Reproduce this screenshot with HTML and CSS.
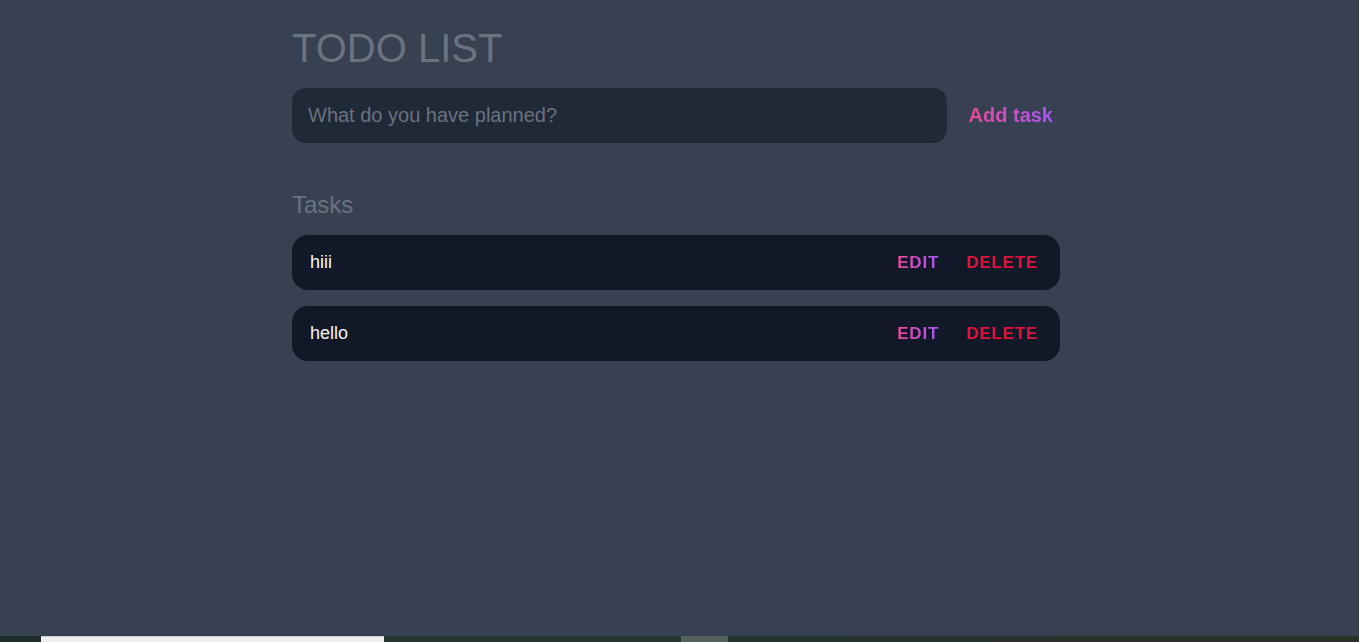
FILE: index.html
```html
<!DOCTYPE html>
<html lang="en">
<head>
<meta charset="utf-8">
<title>Todo List</title>
<link rel="stylesheet" href="styles.css">
</head>
<body>
<main class="app">
  <h1 class="title">TODO LIST</h1>
  <form class="new-task" onsubmit="return false">
    <input class="new-task-input" type="text" placeholder="What do you have planned?">
    <button class="add-btn" type="submit"><span class="grad">Add task</span></button>
  </form>
  <section class="tasks">
    <h2 class="tasks-title">Tasks</h2>
    <div class="task">
      <span class="task-text">hiii</span>
      <div class="actions">
        <button class="edit"><span class="grad">Edit</span></button>
        <button class="delete">Delete</button>
      </div>
    </div>
    <div class="task">
      <span class="task-text">hello</span>
      <div class="actions">
        <button class="edit"><span class="grad">Edit</span></button>
        <button class="delete">Delete</button>
      </div>
    </div>
  </section>
</main>
<div class="taskbar">
  <div class="tb-left"></div>
  <div class="tb-window"></div>
  <div class="tb-mid"></div>
  <div class="tb-btn"></div>
  <div class="tb-rest"></div>
</div>
</body>
</html>
```
FILE: styles.css
```css
* { box-sizing: border-box; }
html, body { height: 100%; }
body {
  margin: 0;
  background: #374151;
  font-family: "Liberation Sans", Arial, sans-serif;
  display: flex;
  flex-direction: column;
  min-height: 100vh;
}
.app {
  flex: 1;
  width: 768px;
  margin-left: 292px;
}
.title {
  margin: 25px 0 0;
  font-size: 40px;
  line-height: 46px;
  font-weight: 400;
  color: #6b7280;
}
.new-task {
  margin-top: 17px;
  display: flex;
  align-items: center;
}
.new-task-input {
  flex: 1;
  height: 55px;
  border: none;
  outline: none;
  border-radius: 14px;
  background: #1f2937;
  padding: 0 16px;
  font-family: inherit;
  font-size: 20px;
  color: #e5e7eb;
}
.new-task-input::placeholder { color: #6b7280; }
.add-btn {
  margin-left: 15px;
  padding: 0 7px;
  background: none;
  border: none;
  font-family: inherit;
  font-size: 20px;
  font-weight: 700;
  cursor: pointer;
}
.grad {
  background: linear-gradient(90deg, #ec4899, #a855f7);
  -webkit-background-clip: text;
  background-clip: text;
  color: transparent;
}
.tasks { margin-top: 49px; }
.tasks-title {
  margin: 0;
  font-size: 24px;
  line-height: 26px;
  font-weight: 400;
  color: #6b7280;
}
.task {
  margin-top: 17px;
  height: 55px;
  background: #111827;
  border-radius: 16px;
  display: flex;
  align-items: center;
  justify-content: space-between;
  padding: 0 21px 0 18px;
}
.task + .task { margin-top: 16px; }
.task-text {
  font-size: 18px;
  color: #f3f4f6;
}
.actions {
  display: flex;
  align-items: center;
  gap: 26px;
}
.edit, .delete {
  background: none;
  border: none;
  padding: 0;
  font-family: inherit;
  font-size: 17px;
  font-weight: 700;
  text-transform: uppercase;
  letter-spacing: 0.8px;
  cursor: pointer;
}
.edit { margin-right: 1px; }
.delete { color: #dc143c; margin-right: 1px; }
.taskbar {
  height: 6px;
  display: flex;
  flex-shrink: 0;
}
.tb-left { width: 41px; background: #1d2b2b; }
.tb-window { width: 343px; background: #f0f0f0; border-top: 1px solid #c8ccd0; }
.tb-mid { width: 297px; background: #263530; }
.tb-btn { width: 47px; background: #56625e; }
.tb-rest { flex: 1; background: linear-gradient(90deg, #24332e, #2a3226); }
```
